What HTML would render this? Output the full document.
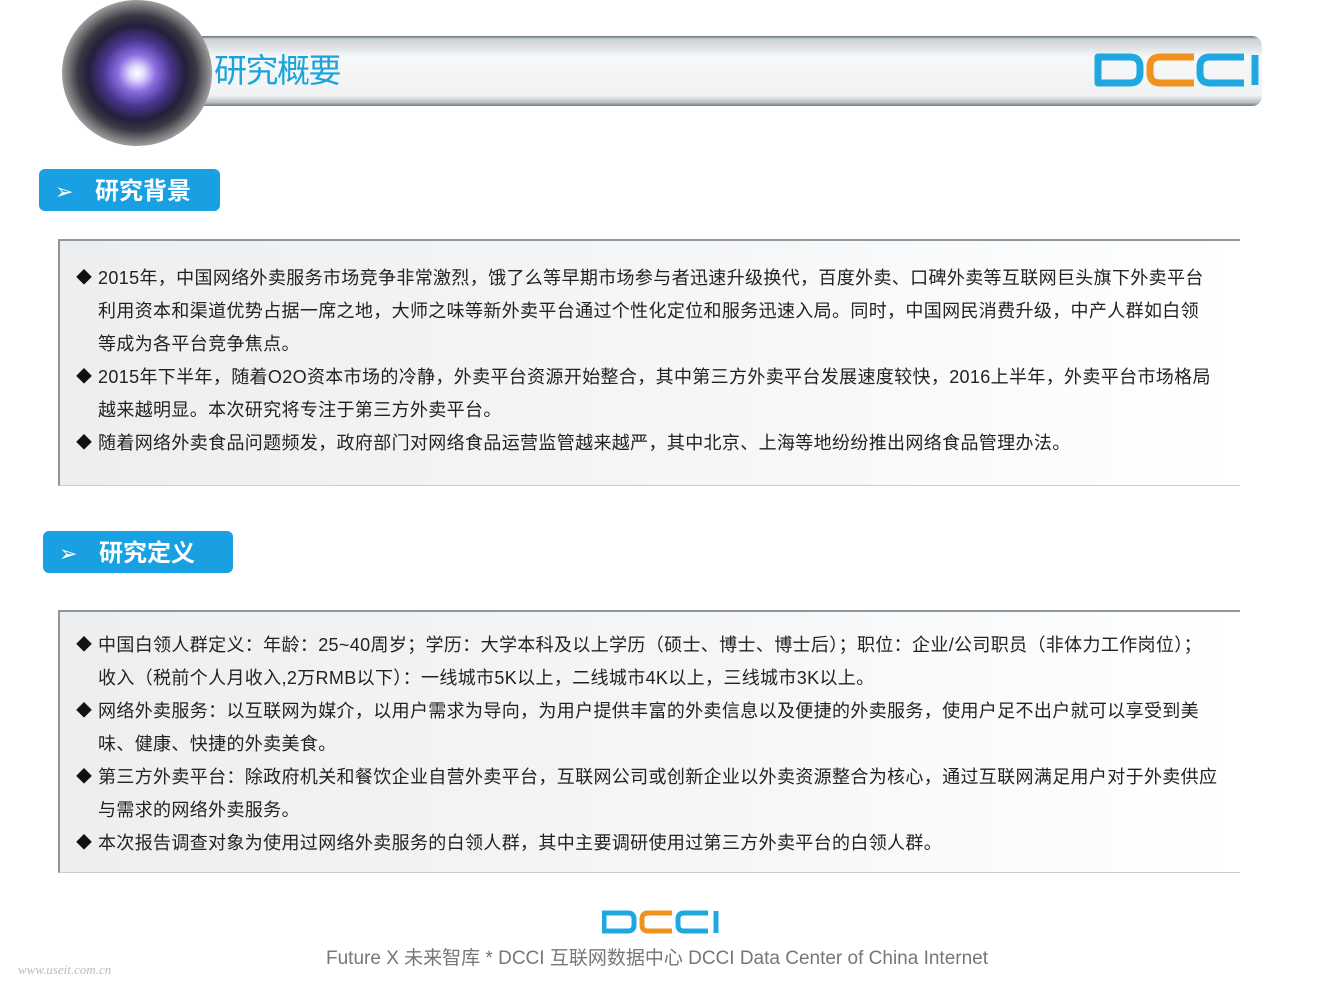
<!DOCTYPE html>
<html><head><meta charset="utf-8"><style>
body{margin:0;width:1320px;height:990px;background:#fff;position:relative;overflow:hidden;font-family:"Liberation Sans","Noto Sans CJK SC",sans-serif;}
.bar{position:absolute;left:150px;top:36px;width:1112px;height:70px;background:linear-gradient(#5f6d76 0,#c9d0d5 3px,#f7f8f9 30%,#f0f2f3 85%,#b8c0c5 95%,#6d7a82 100%);border-radius:0 10px 10px 0;}
.orb{position:absolute;left:62px;top:0px;width:150px;height:146px;border-radius:50%;background:radial-gradient(ellipse,#fff 0,#e0d8ff 7%,#8a6ee0 18%,#4a3590 32%,#22203a 46%,#3a3a44 56%,#9a9a9a 70%,#e2e2e2 85%,#fff 100%);}
.title{position:absolute;left:214px;top:44px;font-size:33px;color:#1aa3dc;font-family:"Noto Sans CJK SC",sans-serif;font-weight:400;letter-spacing:-1.5px}
.tab{position:absolute;background:#18a0e2;border-radius:6px;color:#fff;font-weight:bold;font-size:24px;font-family:"Noto Sans CJK SC",sans-serif;}
.tab span.a{position:absolute;left:16px;top:5px;font-size:22px;font-weight:normal}
.tab span.t{position:absolute;left:56px;top:2px}
.box{position:absolute;left:58px;width:1182px;border-top:2px solid #8e979d;border-left:2px solid #8e979d;border-bottom:1px solid #c9ced2;background:linear-gradient(90deg,#eceef0,#f6f7f8 60%,#fff);box-sizing:border-box;}
.ln{position:absolute;left:38px;font-size:18px;color:#222;white-space:nowrap;line-height:33px;letter-spacing:0.35px}
.d{position:absolute;left:16px;font-size:16px;color:#111;line-height:33px}
.foot{position:absolute;left:326px;top:943px;font-size:19px;color:#777;font-family:"Liberation Sans","Noto Sans CJK SC",sans-serif;}
</style></head><body>
<div class="bar"></div>
<div class="orb"></div>
<div class="title">研究概要</div>
<svg style="position:absolute;left:1094px;top:53px" width="168" height="34" viewBox="0 0 168 34">
<g fill="none" stroke-width="7" stroke-linejoin="round">
<path d="M4 4 H36 Q46 4 46 14 V20 Q46 30 36 30 H4 Z" stroke="#1fa8e0"/>
<path d="M100 4 H66 Q56 4 56 14 V20 Q56 30 66 30 H100" stroke="#f0921e"/>
<path d="M150 4 H116 Q106 4 106 14 V20 Q106 30 116 30 H150" stroke="#1fa8e0"/>
<path d="M161 2 V32" stroke="#1fa8e0"/>
</g></svg>
<div class="tab" style="left:39px;top:169px;width:181px;height:42px"><span class="a">➢</span><span class="t">研究背景</span></div>
<div class="box" style="top:239px;height:247px">
<div class="d" style="top:21px">◆</div><div class="ln" style="top:21px">2015年，中国网络外卖服务市场竞争非常激烈，饿了么等早期市场参与者迅速升级换代，百度外卖、口碑外卖等互联网巨头旗下外卖平台</div>
<div class="ln" style="top:54px">利用资本和渠道优势占据一席之地，大师之味等新外卖平台通过个性化定位和服务迅速入局。同时，中国网民消费升级，中产人群如白领</div>
<div class="ln" style="top:87px">等成为各平台竞争焦点。</div>
<div class="d" style="top:120px">◆</div><div class="ln" style="top:120px">2015年下半年，随着O2O资本市场的冷静，外卖平台资源开始整合，其中第三方外卖平台发展速度较快，2016上半年，外卖平台市场格局</div>
<div class="ln" style="top:153px">越来越明显。本次研究将专注于第三方外卖平台。</div>
<div class="d" style="top:186px">◆</div><div class="ln" style="top:186px">随着网络外卖食品问题频发，政府部门对网络食品运营监管越来越严，其中北京、上海等地纷纷推出网络食品管理办法。</div>
</div>
<div class="tab" style="left:43px;top:531px;width:190px;height:42px"><span class="a">➢</span><span class="t">研究定义</span></div>
<div class="box" style="top:610px;height:263px">
<div class="d" style="top:17px">◆</div><div class="ln" style="top:17px">中国白领人群定义：年龄：25~40周岁；学历：大学本科及以上学历（硕士、博士、博士后）；职位：企业/公司职员（非体力工作岗位）；</div>
<div class="ln" style="top:50px">收入（税前个人月收入,2万RMB以下）：一线城市5K以上，二线城市4K以上，三线城市3K以上。</div>
<div class="d" style="top:83px">◆</div><div class="ln" style="top:83px">网络外卖服务：以互联网为媒介，以用户需求为导向，为用户提供丰富的外卖信息以及便捷的外卖服务，使用户足不出户就可以享受到美</div>
<div class="ln" style="top:116px">味、健康、快捷的外卖美食。</div>
<div class="d" style="top:149px">◆</div><div class="ln" style="top:149px">第三方外卖平台：除政府机关和餐饮企业自营外卖平台，互联网公司或创新企业以外卖资源整合为核心，通过互联网满足用户对于外卖供应</div>
<div class="ln" style="top:182px">与需求的网络外卖服务。</div>
<div class="d" style="top:215px">◆</div><div class="ln" style="top:215px">本次报告调查对象为使用过网络外卖服务的白领人群，其中主要调研使用过第三方外卖平台的白领人群。</div>
</div>
<svg style="position:absolute;left:602px;top:910px" width="118" height="24" viewBox="0 0 118 24">
<g fill="none" stroke-width="5">
<path d="M2 3 H26 Q32 3 32 9 V15 Q32 21 26 21 H2 Z" stroke="#1fa8e0"/>
<path d="M70 3 H46 Q40 3 40 9 V15 Q40 21 46 21 H70" stroke="#f0921e"/>
<path d="M106 3 H82 Q76 3 76 9 V15 Q76 21 82 21 H106" stroke="#1fa8e0"/>
<path d="M114 1 V23" stroke="#1fa8e0"/>
</g></svg>
<div class="foot">Future X 未来智库 * DCCI 互联网数据中心 DCCI Data Center of China Internet</div>
<div style="position:absolute;left:18px;top:962px;font-size:13px;color:#bbb;font-family:'Liberation Serif',serif;font-style:italic">www.useit.com.cn</div>
</body></html>
